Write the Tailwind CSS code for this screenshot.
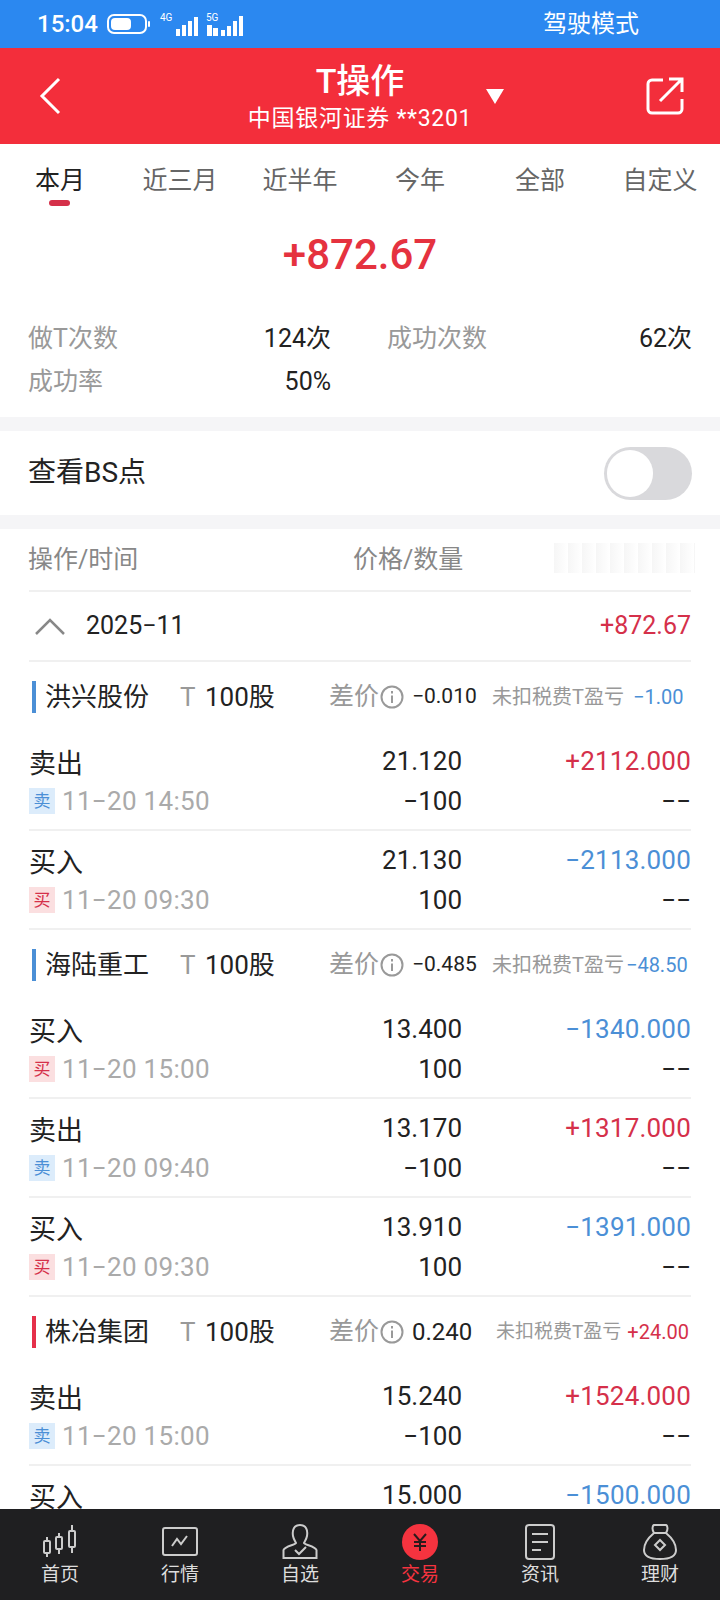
<!DOCTYPE html>
<html lang="zh">
<head>
    <meta charset="UTF-8">
    <meta name="viewport" content="width=device-width, initial-scale=1.0">
    <title>T操作</title>
    <script src="https://cdn.jsdelivr.net/npm/@tailwindcss/browser@4"></script>
</head>
<body class="bg-white font-['Roboto','Noto_Sans_CJK_SC',sans-serif] text-[#222]">
<div class="relative w-[720px] h-[1600px] overflow-hidden bg-white">

    <!-- Status bar -->
    <div class="h-12 bg-[#2b88f0] flex items-center text-white">
        <span class="ml-[37px] text-[24px] font-medium">15:04</span>
        <svg class="ml-[9px]" width="44" height="20" viewBox="0 0 44 20"><rect x="1" y="1" width="38" height="18" rx="6" fill="none" stroke="white" stroke-width="2"/><rect x="4" y="4" width="20" height="12" rx="4" fill="white"/><rect x="41" y="7" width="2" height="6" rx="1" fill="white"/></svg>
        <svg class="ml-[7px]" width="104" height="26" viewBox="0 0 100 26" fill="white">
            <text x="0" y="10" font-size="10" font-family="Roboto">4G</text>
            <rect x="16" y="18" width="4" height="7"/><rect x="22" y="14" width="4" height="11"/><rect x="28" y="10" width="4" height="15"/><rect x="34" y="6" width="4" height="19"/>
            <text x="46" y="10" font-size="10" font-family="Roboto">5G</text>
            <rect x="47" y="14" width="5" height="11"/><rect x="53" y="17" width="5" height="8"/><rect x="61" y="19" width="4" height="6"/><rect x="67" y="15" width="4" height="10"/><rect x="73" y="10" width="4" height="15"/><rect x="79" y="5" width="4" height="20"/>
        </svg>
        <span class="ml-[281px] text-[24px]">驾驶模式</span>
    </div>

    <!-- Title bar -->
    <div class="relative h-24 bg-[#f32e3b] text-white">
        <svg class="absolute left-[38px] top-[29px]" width="24" height="38" viewBox="0 0 24 38" fill="none" stroke="white" stroke-width="3"><path d="M21 2 L4 19 L21 36"/></svg>
        <div class="flex flex-col items-center pt-[11px]">
            <span class="text-[34px] leading-[44px] font-medium">T操作</span>
            <span class="text-[23px] leading-[30px] mt-[1px] tracking-[0.7px]">中国银河证券 **3201</span>
        </div>
        <div class="absolute left-[486px] top-[41px] w-0 h-0 border-x-[9px] border-x-transparent border-t-[15px] border-t-white"></div>
        <svg class="absolute left-[646px] top-[29px]" width="38" height="38" viewBox="0 0 38 38" fill="none" stroke="white" stroke-width="3"><path d="M17 3 H6 a4 4 0 0 0 -4 4 V32 a4 4 0 0 0 4 4 H32 a4 4 0 0 0 4 -4 V22"/><path d="M14 24 L35 3 M23 2 H36 V15"/></svg>
    </div>

    <!-- Period tabs -->
    <div class="grid grid-cols-6 h-[72px] text-center text-[25px] text-[#666]">
        <div class="relative pt-[18px] text-[#222]">本月<div class="absolute left-[49px] top-[56px] w-[21px] h-[6px] rounded-full bg-[#d5304a]"></div></div>
        <div class="pt-[18px]">近三月</div>
        <div class="pt-[18px]">近半年</div>
        <div class="pt-[18px]">今年</div>
        <div class="pt-[18px]">全部</div>
        <div class="pt-[18px]">自定义</div>
    </div>

    <!-- Total -->
    <div class="h-[80px] pt-[7px] text-center text-[42px] leading-[64px] font-medium text-[#e5323f]">+872.67</div>

    <!-- Stats -->
    <div class="h-[121px] px-[28px] pt-[21px] grid grid-cols-[303px_60px_1fr] text-[25px] leading-[43px] content-start">
        <div class="flex justify-between"><span class="text-[#999]">做T次数</span><span>124次</span></div>
        <div></div>
        <div class="flex justify-between -ml-[4px]"><span class="text-[#999]">成功次数</span><span>62次</span></div>
        <div class="flex justify-between"><span class="text-[#999]">成功率</span><span>50%</span></div>
    </div>

    <!-- BS toggle -->
    <div class="h-[112px] border-y-[14px] border-[#f5f5f7] px-[28px] flex items-center justify-between">
        <span class="text-[28px]">查看BS点</span>
        <div class="w-[88px] h-[53px] rounded-full bg-[#d9d9dc] p-[3px]"><div class="w-[46px] h-[47px] rounded-full bg-white"></div></div>
    </div>

    <!-- Table header -->
    <div class="relative mx-[29px] h-[63px] border-b-2 border-[#f0f0f0] flex items-center text-[25px] text-[#888]">
        <span class="w-[325px] -ml-[1px]">操作/时间</span>
        <span>价格/数量</span>
        <div class="absolute left-[525px] top-[14px] w-[141px] h-[30px] bg-[repeating-linear-gradient(90deg,#f6f6f6_0px,#fbfbfb_8px,#ffffff_14px)]"></div>
    </div>

    <!-- Month row -->
    <div class="mx-[29px] h-[70px] border-b-2 border-[#f0f0f0] flex items-center">
        <svg class="ml-[5px]" width="32" height="18" viewBox="0 0 32 18" fill="none" stroke="#888" stroke-width="2.5"><path d="M2 17 L16 3 L30 17"/></svg>
        <span class="ml-[20px] text-[25px]">2025−11</span>
        <span class="ml-auto text-[25px] text-[#d5304a]">+872.67</span>
    </div>

    <!-- Group: 洪兴股份 -->
    <div class="mx-[29px] h-[70px] flex items-center whitespace-nowrap">
        <div class="ml-[3px] w-1 h-8 bg-[#4b8fd6] shrink-0"></div>
        <span class="ml-[9px] w-[135px] shrink-0 text-[26px]">洪兴股份</span>
        <span class="w-[16px] shrink-0 text-[26px] text-[#999]">T</span>
        <span class="ml-[9px] w-[124px] shrink-0 text-[26px]">100股</span>
        <span class="text-[25px] text-[#999]">差价</span>
        <svg class="ml-[1px] shrink-0" width="24" height="24" viewBox="0 0 24 24" fill="none" stroke="#999" stroke-width="2"><circle cx="12" cy="12" r="10.500"/><path d="M12 10.5 V18 M12 6 V8.5"/></svg>
        <span class="ml-[8px] w-[80px] shrink-0 text-[21px]">−0.010</span>
        <span class="text-[20px] text-[#999]">未扣税费T盈亏</span>
        <span class="ml-[9px] text-[20px] text-[#4b8fd6]">−1.00</span>
    </div>

    <div class="mx-[29px] h-[99px] border-b-2 border-[#f0f0f0] grid grid-cols-[433px_1fr] content-start">
        <div class="relative h-full">
            <div class="absolute left-0 top-[13px] text-[27px] leading-[38px]">卖出</div>
            <div class="absolute left-0 top-[54px] flex items-center"><span class="w-[26px] h-[26px] bg-[#dcecfb] text-[#4b8fd6] text-[17px] leading-[26px] text-center">卖</span><span class="ml-[7px] text-[26px] leading-[30px] tracking-[0.3px] text-[#aaa]">11−20 14:50</span></div>
            <div class="absolute right-0 top-[13px] text-[26px] leading-[32px]">21.120</div>
            <div class="absolute right-0 top-[53px] text-[26px] leading-[32px]">−100</div>
        </div>
        <div class="text-right text-[26px] leading-[32px] pt-[13px]"><div class="tracking-[0.2px] text-[#d5304a]">+2112.000</div><div class="mt-[8px]">−−</div></div>
    </div>
    <div class="mx-[29px] h-[99px] border-b-2 border-[#f0f0f0] grid grid-cols-[433px_1fr] content-start">
        <div class="relative h-full">
            <div class="absolute left-0 top-[13px] text-[27px] leading-[38px]">买入</div>
            <div class="absolute left-0 top-[54px] flex items-center"><span class="w-[26px] h-[26px] bg-[#fbdfe0] text-[#d5304a] text-[17px] leading-[26px] text-center">买</span><span class="ml-[7px] text-[26px] leading-[30px] tracking-[0.3px] text-[#aaa]">11−20 09:30</span></div>
            <div class="absolute right-0 top-[13px] text-[26px] leading-[32px]">21.130</div>
            <div class="absolute right-0 top-[53px] text-[26px] leading-[32px]">100</div>
        </div>
        <div class="text-right text-[26px] leading-[32px] pt-[13px]"><div class="tracking-[0.2px] text-[#4b8fd6]">−2113.000</div><div class="mt-[8px]">−−</div></div>
    </div>

    <!-- Group: 海陆重工 -->
    <div class="mx-[29px] h-[70px] flex items-center whitespace-nowrap">
        <div class="ml-[3px] w-1 h-8 bg-[#4b8fd6] shrink-0"></div>
        <span class="ml-[9px] w-[135px] shrink-0 text-[26px]">海陆重工</span>
        <span class="w-[16px] shrink-0 text-[26px] text-[#999]">T</span>
        <span class="ml-[9px] w-[124px] shrink-0 text-[26px]">100股</span>
        <span class="text-[25px] text-[#999]">差价</span>
        <svg class="ml-[1px] shrink-0" width="24" height="24" viewBox="0 0 24 24" fill="none" stroke="#999" stroke-width="2"><circle cx="12" cy="12" r="10.500"/><path d="M12 10.5 V18 M12 6 V8.5"/></svg>
        <span class="ml-[8px] w-[80px] shrink-0 text-[21px]">−0.485</span>
        <span class="text-[20px] text-[#999]">未扣税费T盈亏</span>
        <span class="ml-[2px] text-[20px] text-[#4b8fd6]">−48.50</span>
    </div>

    <div class="mx-[29px] h-[99px] border-b-2 border-[#f0f0f0] grid grid-cols-[433px_1fr] content-start">
        <div class="relative h-full">
            <div class="absolute left-0 top-[13px] text-[27px] leading-[38px]">买入</div>
            <div class="absolute left-0 top-[54px] flex items-center"><span class="w-[26px] h-[26px] bg-[#fbdfe0] text-[#d5304a] text-[17px] leading-[26px] text-center">买</span><span class="ml-[7px] text-[26px] leading-[30px] tracking-[0.3px] text-[#aaa]">11−20 15:00</span></div>
            <div class="absolute right-0 top-[13px] text-[26px] leading-[32px]">13.400</div>
            <div class="absolute right-0 top-[53px] text-[26px] leading-[32px]">100</div>
        </div>
        <div class="text-right text-[26px] leading-[32px] pt-[13px]"><div class="tracking-[0.2px] text-[#4b8fd6]">−1340.000</div><div class="mt-[8px]">−−</div></div>
    </div>
    <div class="mx-[29px] h-[99px] border-b-2 border-[#f0f0f0] grid grid-cols-[433px_1fr] content-start">
        <div class="relative h-full">
            <div class="absolute left-0 top-[13px] text-[27px] leading-[38px]">卖出</div>
            <div class="absolute left-0 top-[54px] flex items-center"><span class="w-[26px] h-[26px] bg-[#dcecfb] text-[#4b8fd6] text-[17px] leading-[26px] text-center">卖</span><span class="ml-[7px] text-[26px] leading-[30px] tracking-[0.3px] text-[#aaa]">11−20 09:40</span></div>
            <div class="absolute right-0 top-[13px] text-[26px] leading-[32px]">13.170</div>
            <div class="absolute right-0 top-[53px] text-[26px] leading-[32px]">−100</div>
        </div>
        <div class="text-right text-[26px] leading-[32px] pt-[13px]"><div class="tracking-[0.2px] text-[#d5304a]">+1317.000</div><div class="mt-[8px]">−−</div></div>
    </div>
    <div class="mx-[29px] h-[99px] border-b-2 border-[#f0f0f0] grid grid-cols-[433px_1fr] content-start">
        <div class="relative h-full">
            <div class="absolute left-0 top-[13px] text-[27px] leading-[38px]">买入</div>
            <div class="absolute left-0 top-[54px] flex items-center"><span class="w-[26px] h-[26px] bg-[#fbdfe0] text-[#d5304a] text-[17px] leading-[26px] text-center">买</span><span class="ml-[7px] text-[26px] leading-[30px] tracking-[0.3px] text-[#aaa]">11−20 09:30</span></div>
            <div class="absolute right-0 top-[13px] text-[26px] leading-[32px]">13.910</div>
            <div class="absolute right-0 top-[53px] text-[26px] leading-[32px]">100</div>
        </div>
        <div class="text-right text-[26px] leading-[32px] pt-[13px]"><div class="tracking-[0.2px] text-[#4b8fd6]">−1391.000</div><div class="mt-[8px]">−−</div></div>
    </div>

    <!-- Group: 株冶集团 -->
    <div class="mx-[29px] h-[70px] flex items-center whitespace-nowrap">
        <div class="ml-[3px] w-1 h-8 bg-[#e5304a] shrink-0"></div>
        <span class="ml-[9px] w-[135px] shrink-0 text-[26px]">株冶集团</span>
        <span class="w-[16px] shrink-0 text-[26px] text-[#999]">T</span>
        <span class="ml-[9px] w-[124px] shrink-0 text-[26px]">100股</span>
        <span class="text-[25px] text-[#999]">差价</span>
        <svg class="ml-[1px] shrink-0" width="24" height="24" viewBox="0 0 24 24" fill="none" stroke="#999" stroke-width="2"><circle cx="12" cy="12" r="10.500"/><path d="M12 10.5 V18 M12 6 V8.5"/></svg>
        <span class="ml-[8px] w-[84px] shrink-0 text-[24px]">0.240</span>
        <span class="text-[19px] text-[#999]">未扣税费T盈亏</span>
        <span class="ml-[6px] text-[20px] text-[#d5304a]">+24.00</span>
    </div>

    <div class="mx-[29px] h-[99px] border-b-2 border-[#f0f0f0] grid grid-cols-[433px_1fr] content-start">
        <div class="relative h-full">
            <div class="absolute left-0 top-[13px] text-[27px] leading-[38px]">卖出</div>
            <div class="absolute left-0 top-[54px] flex items-center"><span class="w-[26px] h-[26px] bg-[#dcecfb] text-[#4b8fd6] text-[17px] leading-[26px] text-center">卖</span><span class="ml-[7px] text-[26px] leading-[30px] tracking-[0.3px] text-[#aaa]">11−20 15:00</span></div>
            <div class="absolute right-0 top-[13px] text-[26px] leading-[32px]">15.240</div>
            <div class="absolute right-0 top-[53px] text-[26px] leading-[32px]">−100</div>
        </div>
        <div class="text-right text-[26px] leading-[32px] pt-[13px]"><div class="tracking-[0.2px] text-[#d5304a]">+1524.000</div><div class="mt-[8px]">−−</div></div>
    </div>
    <div class="mx-[29px] h-[99px] grid grid-cols-[433px_1fr] content-start">
        <div class="relative h-full">
            <div class="absolute left-0 top-[13px] text-[27px] leading-[38px]">买入</div>
            <div class="absolute right-0 top-[13px] text-[26px] leading-[32px]">15.000</div>
        </div>
        <div class="text-right text-[26px] leading-[32px] pt-[13px]"><div class="tracking-[0.2px] text-[#4b8fd6]">−1500.000</div></div>
    </div>

    <!-- Bottom nav -->
    <nav class="absolute left-0 bottom-0 w-full h-[91px] bg-[#1f1f21] grid grid-cols-6 text-center text-[19px] text-[#ddd]">
        <div class="flex flex-col items-center pt-[15px]">
            <svg width="36" height="36" viewBox="0 0 36 36" fill="none" stroke="#ccc" stroke-width="2"><rect x="2" y="17" width="6" height="12" rx="1"/><path d="M5 13 V17 M5 29 V33"/><rect x="14" y="13" width="6" height="12" rx="1"/><path d="M17 9 V13 M17 25 V30"/><rect x="27" y="7" width="6" height="16" rx="1"/><path d="M30 1 V7 M30 23 V29"/></svg>
            <span class="leading-[28px] mt-[1px]">首页</span>
        </div>
        <div class="flex flex-col items-center pt-[15px]">
            <svg width="36" height="36" viewBox="0 0 36 36" fill="none" stroke="#ccc" stroke-width="2"><rect x="1" y="4" width="34" height="27" rx="2"/><path d="M10 22 L15 15 L19 20 L25 12"/></svg>
            <span class="leading-[28px] mt-[1px]">行情</span>
        </div>
        <div class="flex flex-col items-center pt-[15px]">
            <svg width="36" height="36" viewBox="0 0 36 36" fill="none" stroke="#ccc" stroke-width="2"><path d="M18 1 C12 1 10 6 11 12 C11.5 15 13 17 14 19 C13 21 3 22 1.500 26 V34 H34.500 V26 C33 22 23 21 22 19 C23 17 24.500 15 25 12 C26 6 24 1 18 1 Z"/><path d="M13 26 L17 30 L24 23"/></svg>
            <span class="leading-[28px] mt-[1px]">自选</span>
        </div>
        <div class="flex flex-col items-center pt-[15px] text-[#f5333f]">
            <div class="w-9 h-9 rounded-full bg-[#f5333f] flex items-center justify-center">
                <svg width="16" height="18" viewBox="0 0 16 18" fill="none" stroke="#2a1a1c" stroke-width="2"><path d="M2 1 L8 8 L14 1 M8 8 V18 M2 9 H14 M2 13 H14"/></svg>
            </div>
            <span class="leading-[28px] mt-[1px]">交易</span>
        </div>
        <div class="flex flex-col items-center pt-[15px]">
            <svg width="36" height="36" viewBox="0 0 36 36" fill="none" stroke="#ccc" stroke-width="2"><rect x="4" y="1" width="28" height="34" rx="3"/><path d="M10 10 H26 M10 18 H26 M10 26 H19"/></svg>
            <span class="leading-[28px] mt-[1px]">资讯</span>
        </div>
        <div class="flex flex-col items-center pt-[15px]">
            <svg width="36" height="36" viewBox="0 0 36 36" fill="none" stroke="#ccc" stroke-width="2"><path d="M12 9 C10 6 10 2 12 1 H24 C26 2 26 6 24 9 Z"/><path d="M12 9 C6 14 2 20 2 26 C2 32 7 35 18 35 C29 35 34 32 34 26 C34 20 30 14 24 9"/><path d="M18 16 L23 21 L18 26 L13 21 Z"/></svg>
            <span class="leading-[28px] mt-[1px]">理财</span>
        </div>
    </nav>
</div>
</body>
</html>
